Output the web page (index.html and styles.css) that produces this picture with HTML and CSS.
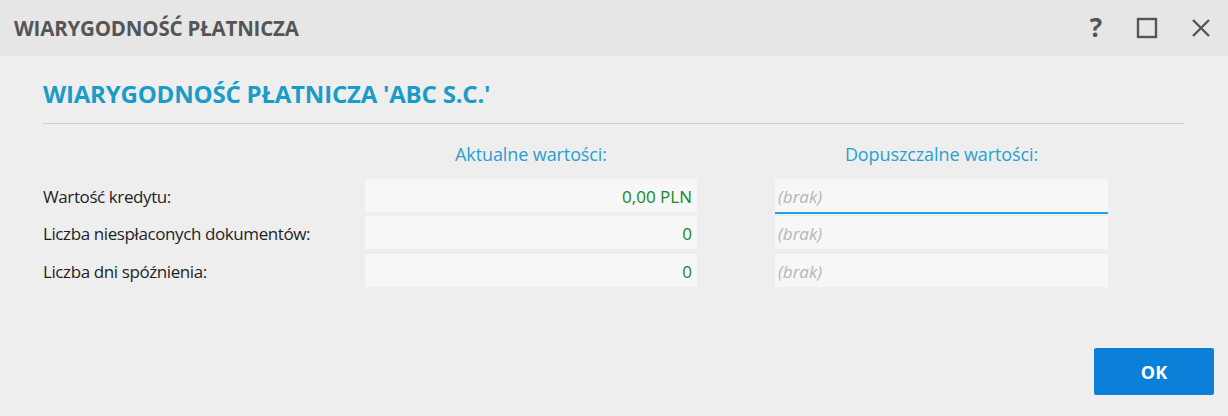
FILE: index.html
```html
<!DOCTYPE html>
<html lang="pl">
  <head>
    <meta charset="UTF-8" />
    <meta name="viewport" content="width=device-width, initial-scale=1.0" />
    <title>Wiarygodność płatnicza</title>
    <link rel="stylesheet" href="styles.css">
  </head>
  <body>
    <div class="dialog">
      <header class="titlebar">
        <h1>WIARYGODNOŚĆ PŁATNICZA</h1>
        <div class="window-buttons">
          <span class="help">?</span>
          <svg class="icon" width="22" height="22" viewBox="0 0 22 22">
            <rect x="2" y="2" width="18" height="18" fill="none" stroke="#555" stroke-width="2.4" />
          </svg>
          <svg class="icon" width="22" height="22" viewBox="0 0 22 22">
            <path d="M3 3 L19 19 M19 3 L3 19" stroke="#555" stroke-width="2.4" fill="none" />
          </svg>
        </div>
      </header>

      <section class="content">
        <h2>WIARYGODNOŚĆ PŁATNICZA 'ABC S.C.'</h2>

        <div class="grid">
          <div></div>
          <div class="col-title">Aktualne wartości:</div>
          <div class="col-title allowed">Dopuszczalne wartości:</div>

          <div class="label">Wartość kredytu:</div>
          <div class="value">0,00 PLN</div>
          <div class="field allowed focused">(brak)</div>

          <div class="label">Liczba niespłaconych dokumentów:</div>
          <div class="value">0</div>
          <div class="field allowed">(brak)</div>

          <div class="label">Liczba dni spóźnienia:</div>
          <div class="value">0</div>
          <div class="field allowed">(brak)</div>
        </div>
      </section>

      <footer class="actions">
        <button class="ok">OK</button>
      </footer>
    </div>
  </body>
</html>
```

FILE: styles.css
```css
/* General Styling */
body {
  margin: 0;
  font-family: "Open Sans", "Noto Sans", sans-serif;
  background-color: #eeeeee;
  color: #222;
}

.dialog {
  height: 416px;
  display: flex;
  flex-direction: column;
}

.titlebar {
  height: 56px;
  background-color: #e6e6e6;
  display: flex;
  align-items: center;
  justify-content: space-between;
  padding: 0 16px 0 14px;
}

.titlebar h1 {
  margin: 0;
  font-size: 20.5px;
  font-weight: 700;
  color: #555;
  letter-spacing: -0.2px;
}

.window-buttons {
  display: flex;
  align-items: center;
  gap: 32px;
}

.help {
  font-size: 26px;
  font-weight: 700;
  color: #555;
  width: 16px;
  text-align: center;
  margin-top: -2px;
}

.content {
  padding: 0 44px 0 43px;
  flex: 1;
}

.content h2 {
  margin: 21px 0 0;
  padding-bottom: 13px;
  line-height: 33px;
  border-bottom: 1px solid #cfcfcf;
  font-size: 24px;
  font-weight: 700;
  color: #1a9cc9;
  letter-spacing: -0.2px;
}

.grid {
  display: grid;
  grid-template-columns: 322px 332px 411px;
  grid-template-rows: 32px;
  grid-auto-rows: 33px;
  row-gap: 4.5px;
  margin-top: 18px;
}

.col-title {
  font-size: 18px;
  color: #2a9fd0;
  text-align: center;
  line-height: 24px;
  letter-spacing: -0.1px;
}

.allowed {
  margin-left: 78px;
}

.label {
  font-size: 17px;
  line-height: 35px;
  letter-spacing: -0.4px;
  color: #1e1e1e;
}

.value,
.field {
  background-color: #f7f7f7;
  font-size: 17px;
  line-height: 35px;
}

.value {
  color: #138a1a;
  text-align: right;
  padding-right: 5px;
}

.field {
  color: #b5b5b5;
  font-style: italic;
  padding-left: 3px;
}

.focused {
  box-shadow: 0 2px 0 #1ea3e6;
}

.actions {
  display: flex;
  justify-content: flex-end;
  padding: 0 14px 21px 0;
}

.ok {
  width: 120px;
  height: 47px;
  border: none;
  border-radius: 2px;
  background-color: #0a7fd8;
  color: white;
  font-family: "Open Sans", sans-serif;
  font-size: 18px;
  font-weight: 700;
}
```
